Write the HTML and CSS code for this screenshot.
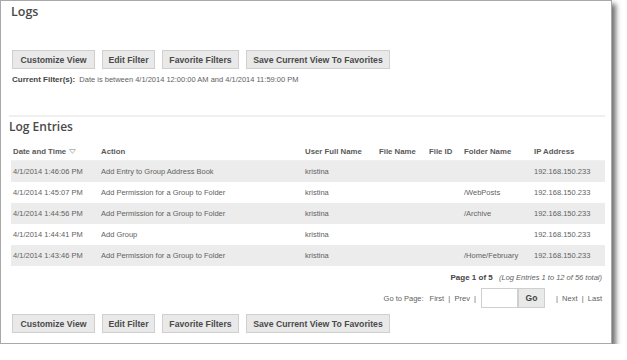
FILE: index.html
```html
<!DOCTYPE html>
<html lang="en">
<head>
  <meta charset="UTF-8">
  <title>Logs</title>
  <link rel="stylesheet" href="styles.css">
</head>
<body>

  <div class="panel">
    <h1 class="title">Logs</h1>

    <div class="toolbar">
      <button class="btn" style="width: 83px">Customize View</button>
      <button class="btn" style="width: 53px">Edit Filter</button>
      <button class="btn" style="width: 77px">Favorite Filters</button>
      <button class="btn" style="width: 144px">Save Current View To Favorites</button>
    </div>

    <div class="filter-line">
      <b>Current Filter(s):</b>&nbsp; Date is between 4/1/2014 12:00:00 AM and 4/1/2014 11:59:00 PM
    </div>

    <div class="separator"></div>

    <h2 class="subtitle">Log Entries</h2>

    <div class="log-table">
      <div class="row head">
        <div class="cell">Date and Time
          <svg class="sort" width="7" height="5" viewBox="0 0 7 5"><path d="M0.5 0.5 L6.5 0.5 L3.5 4.5 Z" fill="none" stroke="#bbb" stroke-width="1"/></svg>
        </div>
        <div class="cell">Action</div>
        <div class="cell">User Full Name</div>
        <div class="cell">File Name</div>
        <div class="cell">File ID</div>
        <div class="cell">Folder Name</div>
        <div class="cell">IP Address</div>
      </div>
      <div class="row odd">
        <div class="cell">4/1/2014 1:46:06 PM</div>
        <div class="cell">Add Entry to Group Address Book</div>
        <div class="cell">kristina</div>
        <div class="cell"></div>
        <div class="cell"></div>
        <div class="cell"></div>
        <div class="cell">192.168.150.233</div>
      </div>
      <div class="row">
        <div class="cell">4/1/2014 1:45:07 PM</div>
        <div class="cell">Add Permission for a Group to Folder</div>
        <div class="cell">kristina</div>
        <div class="cell"></div>
        <div class="cell"></div>
        <div class="cell">/WebPosts</div>
        <div class="cell">192.168.150.233</div>
      </div>
      <div class="row odd">
        <div class="cell">4/1/2014 1:44:56 PM</div>
        <div class="cell">Add Permission for a Group to Folder</div>
        <div class="cell">kristina</div>
        <div class="cell"></div>
        <div class="cell"></div>
        <div class="cell">/Archive</div>
        <div class="cell">192.168.150.233</div>
      </div>
      <div class="row">
        <div class="cell">4/1/2014 1:44:41 PM</div>
        <div class="cell">Add Group</div>
        <div class="cell">kristina</div>
        <div class="cell"></div>
        <div class="cell"></div>
        <div class="cell"></div>
        <div class="cell">192.168.150.233</div>
      </div>
      <div class="row odd">
        <div class="cell">4/1/2014 1:43:46 PM</div>
        <div class="cell">Add Permission for a Group to Folder</div>
        <div class="cell">kristina</div>
        <div class="cell"></div>
        <div class="cell"></div>
        <div class="cell">/Home/February</div>
        <div class="cell">192.168.150.233</div>
      </div>
    </div>

    <div class="page-info">
      <b>Page 1 of 5</b>&nbsp;&nbsp; <i>(Log Entries 1 to 12 of 56 total)</i>
    </div>

    <div class="pager">
      <span>Go to Page:</span>
      <span class="pager-links">First &nbsp;|&nbsp; Prev &nbsp;|</span>
      <input class="page-input" type="text">
      <button class="go-btn">Go</button>
      <span class="pager-links next">| &nbsp;Next &nbsp;| &nbsp;Last</span>
    </div>

    <div class="toolbar bottom">
      <button class="btn" style="width: 83px">Customize View</button>
      <button class="btn" style="width: 53px">Edit Filter</button>
      <button class="btn" style="width: 77px">Favorite Filters</button>
      <button class="btn" style="width: 144px">Save Current View To Favorites</button>
    </div>
  </div>

</body>
</html>
```

FILE: styles.css
```css
body {
  margin: 0;
  background-color: #fff;
  font-family: "Liberation Sans", Arial, sans-serif;
  color: #626262;
}

.panel {
  box-sizing: border-box;
  width: 612px;
  height: 344px;
  border: 1px solid #a8a8a8;
  padding: 0 6px 0 10px;
  background-color: #fff;
  box-shadow: 4px 4px 5px rgba(0, 0, 0, 0.55);
}

.title {
  margin: 2px 0 0 0;
  font-family: "Open Sans", sans-serif;
  font-weight: 600;
  font-size: 12.5px;
  line-height: 18px;
  color: #4a4a4a;
}

.toolbar {
  display: flex;
  gap: 7px;
  margin-top: 29px;
  padding-left: 1px;
}

.toolbar.bottom {
  margin-top: 6px;
}

.btn {
  box-sizing: border-box;
  height: 19px;
  padding: 0;
  border: 1px solid #cfcfcf;
  background-color: #e9e9e9;
  font-family: "Liberation Sans", Arial, sans-serif;
  font-weight: bold;
  font-size: 8.7px;
  color: #4a4a4a;
}

.filter-line {
  margin-top: 5px;
  padding-left: 1px;
  font-size: 7.5px;
  line-height: 12px;
}

.filter-line b {
  font-size: 8px;
  color: #444;
}

.separator {
  margin: 29px 0 0 -2px;
  height: 2px;
  background-color: #efefef;
}

.subtitle {
  margin: 0 0 0 -2px;
  font-family: "Open Sans", sans-serif;
  font-weight: 600;
  font-size: 12px;
  line-height: 20px;
  color: #4a4a4a;
}

.log-table {
  margin-top: 5px;
}

.row {
  display: grid;
  grid-template-columns: 88px 204px 74px 50px 35px 70px 74px;
  height: 21px;
  align-items: center;
  font-size: 7.5px;
}

.row.head {
  height: 18px;
  border-bottom: 1px solid #f0f0f0;
  font-weight: bold;
  font-size: 7.8px;
  color: #5a5a5a;
}

.row.odd {
  background-color: #ececec;
}

.cell {
  padding-left: 2px;
  white-space: nowrap;
}

.sort {
  margin-left: 1px;
  vertical-align: middle;
}

.page-info {
  margin-top: 6px;
  text-align: right;
  padding-right: 3px;
  font-size: 7.5px;
  line-height: 12px;
}

.page-info b {
  font-size: 8px;
  color: #444;
}

.pager {
  display: flex;
  justify-content: flex-end;
  align-items: center;
  margin-top: 4px;
  padding-right: 3px;
  font-size: 7.5px;
  height: 20px;
}

.pager-links {
  margin-left: 6px;
}

.pager-links.next {
  margin-left: 11px;
}

.page-input {
  box-sizing: border-box;
  width: 37px;
  height: 20px;
  margin: 0 0 0 5px;
  border: 1px solid #cfcfcf;
  background-color: #fff;
}

.go-btn {
  box-sizing: border-box;
  width: 27px;
  height: 20px;
  padding: 0;
  border: 1px solid #cfcfcf;
  background-color: #e9e9e9;
  font-family: "Liberation Sans", Arial, sans-serif;
  font-weight: bold;
  font-size: 8.5px;
  color: #444;
}
```
